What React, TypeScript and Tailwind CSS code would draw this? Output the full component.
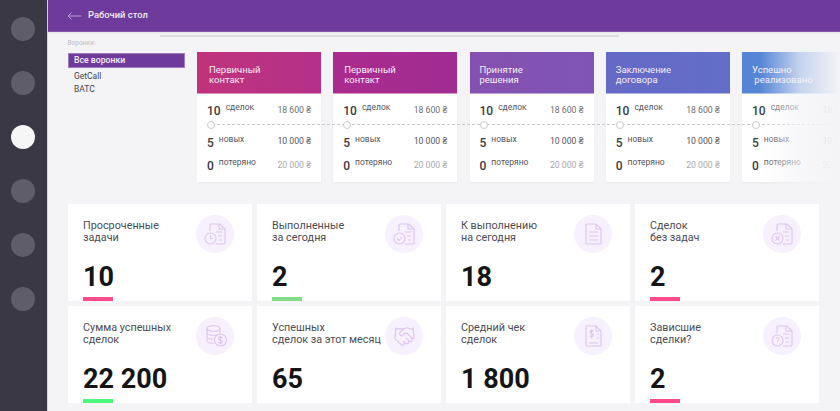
import type { ReactNode } from 'react';
import { Handshake } from 'lucide-react';

const stages = [
  { lines: ['Первичный', 'контакт'], head: 'bg-gradient-to-r from-[#bf337a] to-[#b4318a] border-[#dc8fc0]', pad: 'pl-[12px]' },
  { lines: ['Первичный', 'контакт'], head: 'bg-gradient-to-r from-[#ab2b8e] to-[#a02c92] border-[#d795c8]', pad: 'pl-[11px]' },
  { lines: ['Принятие', 'решения'], head: 'bg-gradient-to-r from-[#8551b0] to-[#7f55b4] border-[#bfa5d9]', pad: 'pl-[10px]' },
  { lines: ['Заключение', 'договора'], head: 'bg-gradient-to-r from-[#6669c6] to-[#626ec8] border-[#b5b4e4]', pad: 'pl-[10px]' },
  { lines: ['Успешно', ' реализовано'], head: 'bg-gradient-to-r from-[#5584d6] to-[#5b8cd8] border-[#a9c2ec]', pad: 'pl-[10px]' },
];

const rows = [
  { count: '10', label: 'сделок', sum: '18 600 ₴', sumCls: 'mt-[2px] text-[#6d6d73]', rowCls: 'mt-[9px]' },
  { count: '5', label: 'новых', sum: '10 000 ₴', sumCls: 'mt-[1px] text-[#55555b]', rowCls: 'mt-[9px]' },
  { count: '0', label: 'потеряно', sum: '20 000 ₴', sumCls: 'mt-[2px] text-[#a8a8ac]', rowCls: 'mt-[7px]' },
];

const Doc = ({ badge, left = 13 }: { badge?: ReactNode; left?: number }) => {
  const r = left + 16;
  return (
    <g>
      <path d={`M${left + 1} 16V10a1 1 0 0 1 1-1h9l5 5v14a1 1 0 0 1-1 1H${left + 7}`} />
      <path d={`M${left + 10} 9v5h6`} />
      <path d={`M${left + 7} 17h6M${left + 9} 21h${r - left - 12}M${left + 10} 25h${r - left - 13}`} />
      {badge}
    </g>
  );
};

const Badge = ({ children }: { children: ReactNode }) => (
  <g>
    <circle cx="14.5" cy="23.5" r="5.5" fill="#f7f0fe" />
    {children}
  </g>
);

const icons: Record<string, ReactNode> = {
  clock: <Doc badge={<Badge><path d="M14.5 20.5v3h2.5" /></Badge>} />,
  check: <Doc badge={<Badge><path d="M12 23.5l2 2 3-3.5" /></Badge>} />,
  doc: (
    <g>
      <path d="M12 10a1 1 0 0 1 1-1h9l5 5v14a1 1 0 0 1-1 1H13a1 1 0 0 1-1-1z" />
      <path d="M22 9v5h5M15 17h9M15 21h9M15 25h9" />
    </g>
  ),
  cross: <Doc badge={<Badge><path d="M12.5 21.5l4 4M16.5 21.5l-4 4" /></Badge>} />,
  coins: (
    <g>
      <ellipse cx="17.5" cy="11.5" rx="6.5" ry="2.8" />
      <path d="M11 11.5v12c0 1.5 2.9 2.8 6.5 2.8M11 15.5c0 1.5 2.9 2.8 6.5 2.8 1 0 2-.1 3-.3M11 19.5c0 1.5 2.9 2.8 6.5 2.8M24 11.5v5" />
      <circle cx="24.5" cy="23" r="6" fill="#f7f0fe" />
      <path d="M26.3 20.8c-.4-.6-1-.9-1.8-.9-1 0-1.8.6-1.8 1.5 0 2 3.7 1.2 3.7 3.2 0 .9-.8 1.5-1.9 1.5-.8 0-1.5-.4-1.9-1M24.5 18.8v8.4" />
    </g>
  ),
  bill: (
    <g>
      <path d="M12 10a1 1 0 0 1 1-1h9l5 5v14a1 1 0 0 1-1 1H13a1 1 0 0 1-1-1z" />
      <path d="M22 9v5h5M15 26h9M23 17h2M23 21h2" />
      <path d="M19.5 14.2c-.4-.6-1-.9-1.7-.9-1 0-1.8.6-1.8 1.5 0 2 3.7 1.2 3.7 3.2 0 .9-.8 1.5-1.9 1.5-.8 0-1.5-.4-1.9-1M17.8 12v10" />
    </g>
  ),
  question: <Doc badge={<Badge><path d="M13 22.2c0-.9.7-1.5 1.6-1.5s1.5.6 1.5 1.4c0 1.2-1.6 1.2-1.6 2.4M14.5 26v.3" /></Badge>} />,
};

const stats = [
  { title: ['Просроченные', 'задачи'], value: '10', icon: 'clock', bar: 'bg-[#fd4a8c]' },
  { title: ['Выполненные', 'за сегодня'], value: '2', icon: 'check', bar: 'bg-[#83de87]' },
  { title: ['К выполнению', 'на сегодня'], value: '18', icon: 'doc', bar: '' },
  { title: ['Сделок', 'без задач'], value: '2', icon: 'cross', bar: 'bg-[#fd4a8c]' },
  { title: ['Сумма успешных', 'сделок'], value: '22 200', icon: 'coins', bar: 'bg-[#4df97c]' },
  { title: ['Успешных', 'сделок за этот месяц'], value: '65', icon: 'hands', bar: '' },
  { title: ['Средний чек', 'сделок'], value: '1 800', icon: 'bill', bar: '' },
  { title: ['Зависшие', 'сделки?'], value: '2', icon: 'question', bar: 'bg-[#fd4a8c]' },
];

const StatIcon = ({ name }: { name: string }) => (
  <div className="flex h-[38px] w-[38px] shrink-0 items-center justify-center rounded-full bg-[#f7f0fe]">
    {name === 'hands' ? (
      <Handshake className="h-[23px] w-[23px] text-[#dcc4f2]" strokeWidth={1.2} />
    ) : (
      <svg width="38" height="38" viewBox="0 0 38 38" fill="none" stroke="#dcc4f2" strokeWidth="1.1">
        {icons[name]}
      </svg>
    )}
  </div>
);

const App = () => {
  return (
    <div className="flex h-[411px] w-[840px] overflow-hidden bg-[#f4f4f7] font-[Roboto,sans-serif]">
      {/* Боковая панель */}
      <aside className="flex w-[47.5px] shrink-0 flex-col items-center gap-[30px] border-r border-[#d5d4dc] bg-[#3a3845] pt-[17px]">
        {[0, 1, 2, 3, 4, 5].map((i) => (
          <div key={i} className={`h-[24px] w-[24px] rounded-full ${i === 2 ? 'bg-[#f6f6f6]' : 'bg-[#5f5d69]'}`} />
        ))}
      </aside>

      <main className="min-w-0 flex-1">
        <header className="flex h-[32px] items-center border-b border-[#8359ad] bg-[#6e3b9c] pl-[19.5px] shadow-[0_1px_2px_rgba(0,0,0,0.08)]">
          <svg width="15" height="8" viewBox="0 0 15 8" fill="none" stroke="#b79bd2" strokeWidth="1">
            <path d="M14.5 4H1M4.5 .5L1 4l3.5 3.5" />
          </svg>
          <span className="ml-[6px] text-[9.4px] font-medium text-[#f1ebf6]">Рабочий стол</span>
        </header>

        <div className="ml-[112.5px] mt-[3px] h-[2px] w-[459px] bg-[#dcdcdf]" />
        <div className="ml-[20px] mt-[2px] text-[6.5px] leading-[8px] text-[#bdbdc2]">Воронки:</div>

        {/* Воронки */}
        <section className="mt-[5px] flex pl-[20px]">
          <div className="w-[117.5px] shrink-0 pt-[1px]">
            <div className="flex h-[15px] items-center border border-[#9d7cc0] bg-[#6e3b9c] pl-[5.5px] text-[8.7px] font-medium text-[#f4eff8]">
              Все воронки
            </div>
            <div className="mt-[2px] pl-[6.5px] text-[8.5px] leading-[13px] text-[#45454c]">
              <div>GetCall</div>
              <div>BATC</div>
            </div>
          </div>

          <div className="relative ml-[12px] flex min-w-0 flex-1 gap-[12.25px] overflow-hidden pb-[2px]">
            {stages.map((stage, idx) => (
              <div key={idx} className="h-[130px] w-[124px] shrink-0 bg-white shadow-[0_1px_2px_rgba(0,0,0,0.05)]">
                <div className={`flex h-[42px] flex-col justify-center border-b pt-[5px] text-[9.5px] leading-[10px] text-[#f7eef7] ${stage.head} ${stage.pad}`}>
                  {stage.lines.map((line) => (
                    <div key={line} className="whitespace-pre">{line}</div>
                  ))}
                </div>
                <div className="px-[10px]">
                  {rows.map((row, i) => (
                    <div key={row.label}>
                      <div className={`flex items-start justify-between ${row.rowCls}`}>
                        <div className="flex items-start">
                          <span className="text-[12px] font-medium leading-[16px] text-[#3a3a40]">{row.count}</span>
                          <span className="ml-[5px] -mt-[1px] text-[8.5px] leading-[10px] text-[#55555c]">{row.label}</span>
                        </div>
                        <span className={`text-[8.7px] leading-[10px] ${row.sumCls}`}>{row.sum}</span>
                      </div>
                      {i === 0 && (
                        <div className="relative z-10 mt-[2px] -mb-[3px] h-[8px] w-[8px] rounded-full border border-[#c9c9cc] bg-white" />
                      )}
                    </div>
                  ))}
                </div>
              </div>
            ))}
            <div className="absolute left-[15px] right-0 top-[72px] border-t border-dashed border-[#c9c9cc]" />
            <div className="absolute bottom-0 right-0 top-0 w-[80px] bg-gradient-to-r from-[#f4f4f7]/0 via-[#f4f4f7]/70 via-50% to-[#f4f4f7]" />
          </div>
        </section>

        {/* Показатели */}
        <section className="ml-[20px] mt-[20px] grid w-[751px] grid-cols-4 gap-[5px]">
          {stats.map((stat) => (
            <div key={stat.title.join()} className="flex h-[97px] flex-col bg-white pl-[15.5px] pr-[17.5px] pt-[11px]">
              <div className="flex items-start justify-between">
                <div className="mt-[5px] whitespace-nowrap text-[10.8px] leading-[12px] text-[#4c4c55]">
                  <div>{stat.title[0]}</div>
                  <div>{stat.title[1]}</div>
                </div>
                <StatIcon name={stat.icon} />
              </div>
              <div className="mt-[11px] text-[27px] font-bold leading-[26px] text-[#151515]">{stat.value}</div>
              {stat.bar && <div className={`mt-auto h-[4px] w-[30px] ${stat.bar}`} />}
            </div>
          ))}
        </section>
      </main>
    </div>
  );
};

export default App;
